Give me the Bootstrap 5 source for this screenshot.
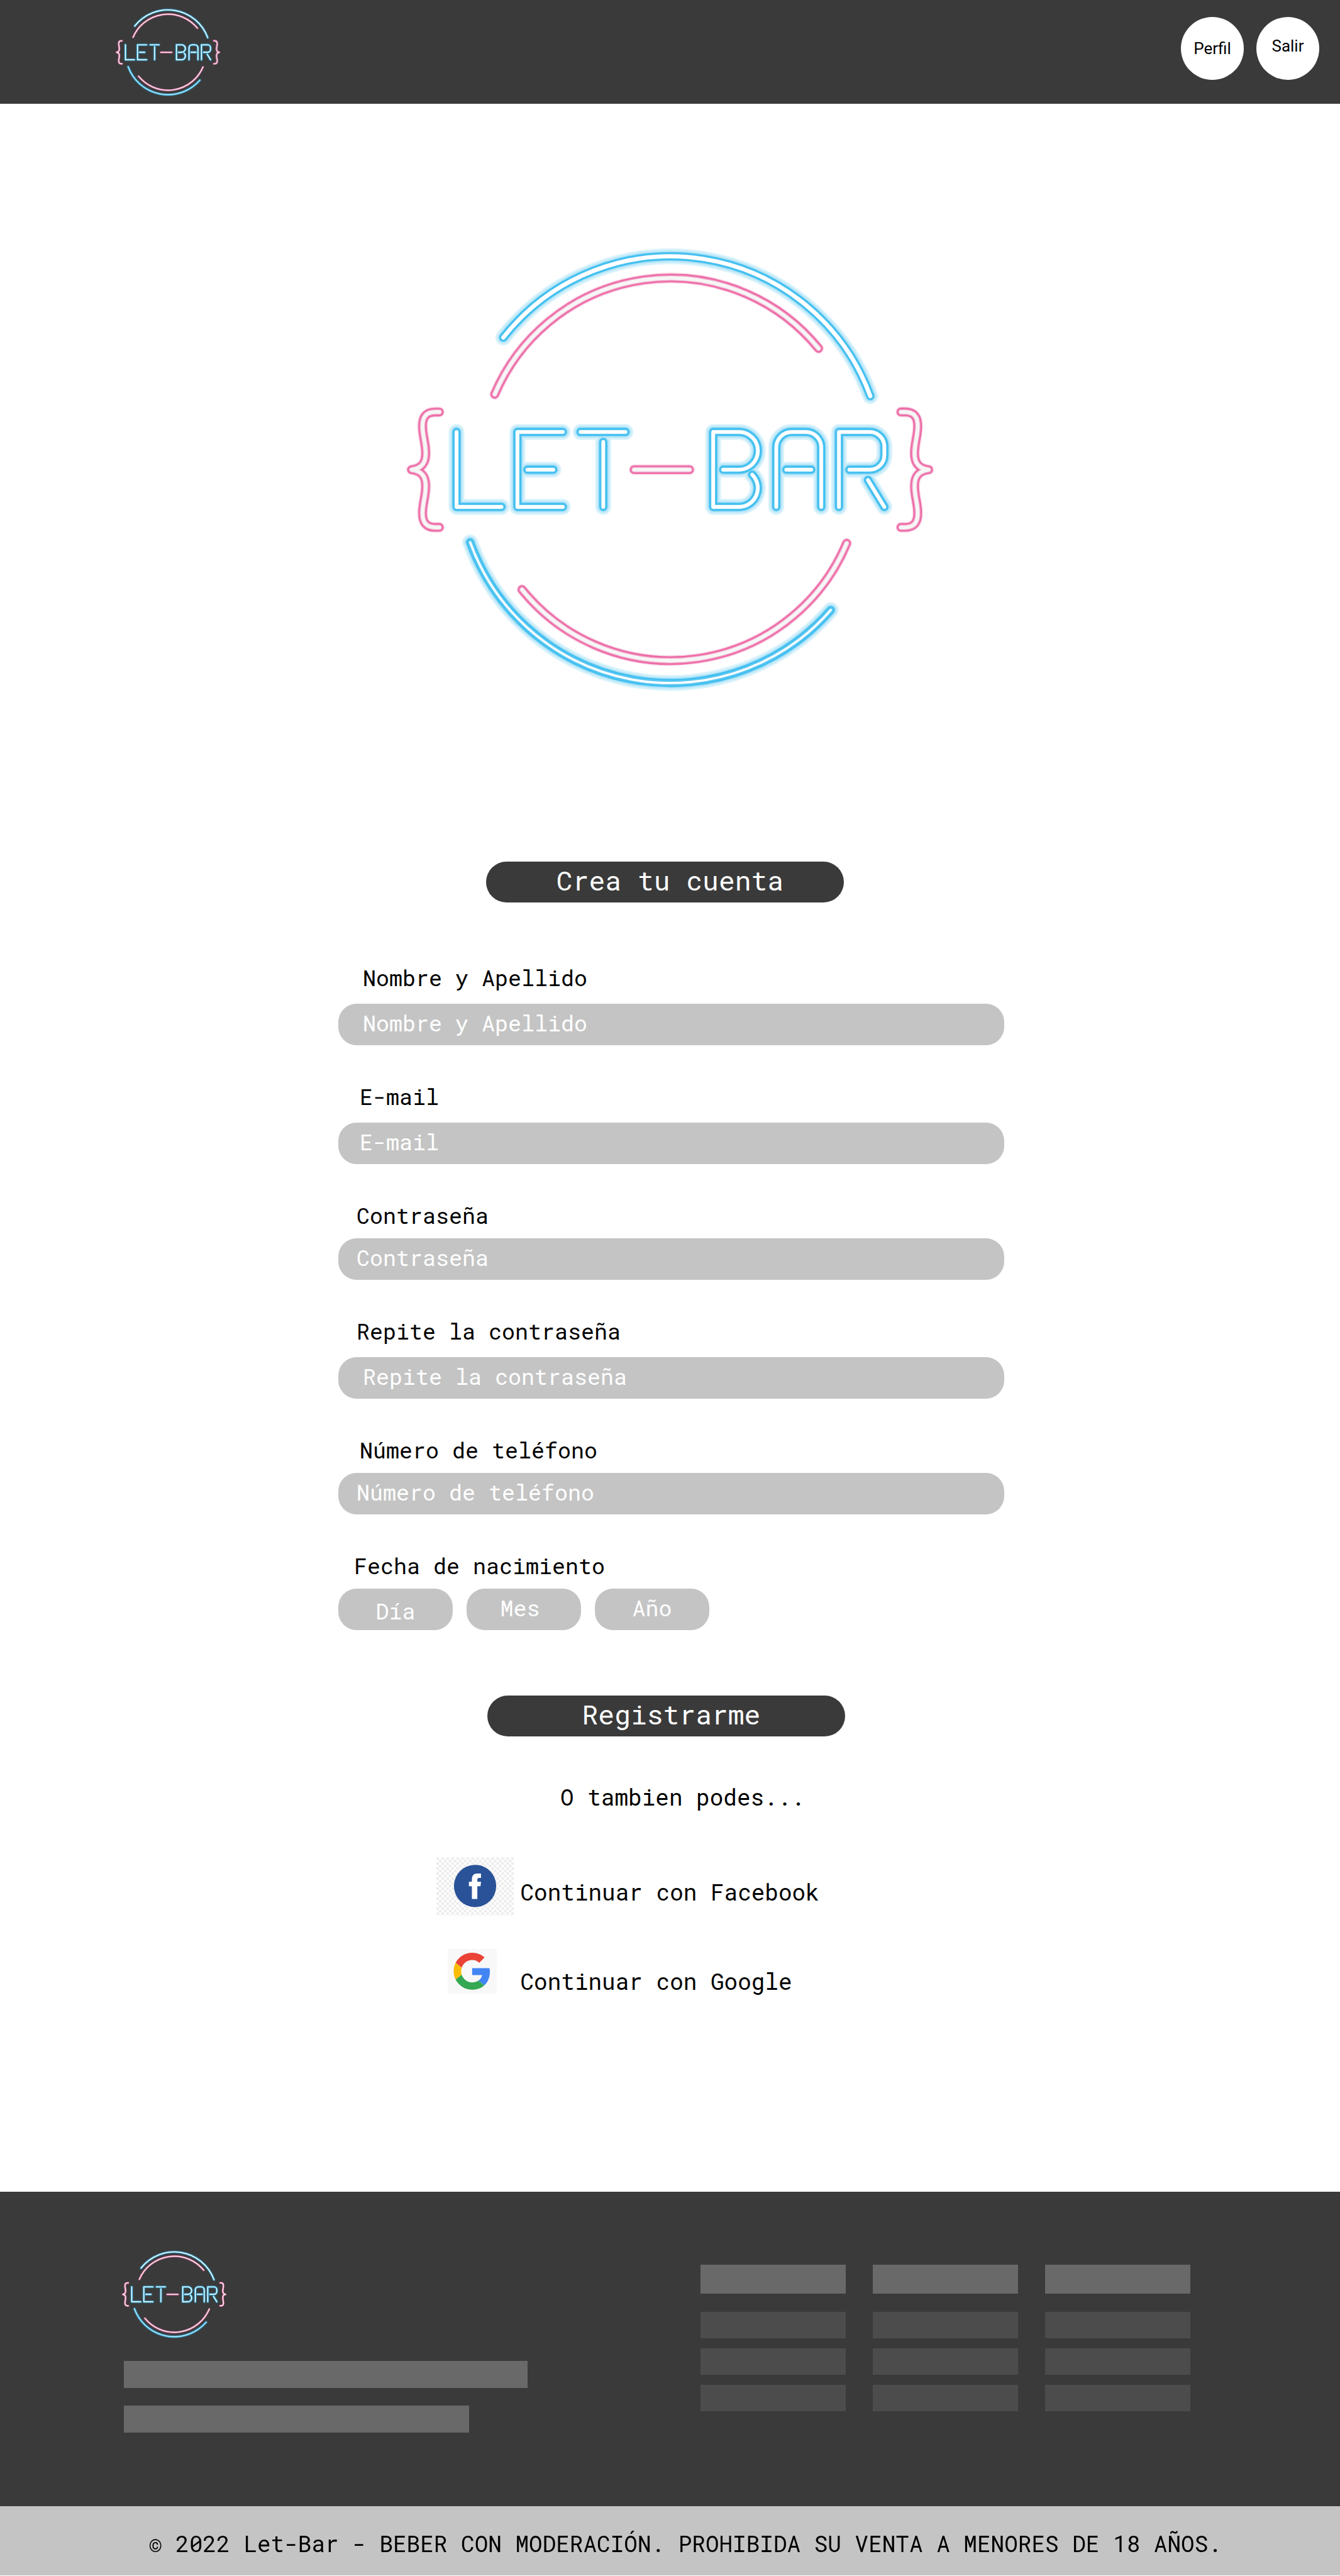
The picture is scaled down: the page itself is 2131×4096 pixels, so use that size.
<!DOCTYPE html>
<html lang="es">
<head>
<meta charset="utf-8">
<meta name="viewport" content="width=device-width, initial-scale=1">
<title>Let-Bar - Crea tu cuenta</title>
<link href="https://cdn.jsdelivr.net/npm/bootstrap@5.3.0/dist/css/bootstrap.min.css" rel="stylesheet">
<style>
  :root { --ink: #3a3a3a; --soft: #c4c4c4; }
  body { font-family: "Roboto Mono", "DejaVu Sans Mono", monospace; color: #000; background: #fff; }

  .site-bar { background: var(--ink); min-height: 165px; padding: 0 33px 0 183px; }
  .logo-sm { width: 168px; height: 142px; }
  .logo-lg { width: 845px; max-width: 90%; height: auto; }
  .hero { padding: 225px 0 268px; }
  .round-btn { width: 100px; height: 100px; padding: 0; border: 0; border-radius: 50%; background: #fff; color: #000;
    font-family: Roboto, sans-serif; font-size: 26px; line-height: 32px; }
  .round-btn:hover { background: #eee; }
  .bar-actions { gap: 20px; padding-bottom: 11px; }

  .pill { width: 569px; max-width: 100%; height: 65px; border: 0; border-radius: 33px; background: var(--ink); color: #fff;
    font-size: 43px; line-height: 60px; font-weight: 400; margin: 0; padding: 0 0 5px; text-align: center; }

  .signup { max-width: 1063px; padding-left: 4px; margin-top: 99px; }
  .signup-fields { gap: 61px; }
  .signup label, .signup legend { font-size: 35px; line-height: 40px; margin: 0 0 17px; float: none; }
  .signup .roomy label { margin-bottom: 22px; }
  .ind-a { padding-left: 39px; }
  .ind-b { padding-left: 34px; }
  .ind-c { padding-left: 29px; }
  .ind-d { padding-left: 25px; }
  .soft-input, .soft-input:focus { height: 66px; border: 0; border-radius: 29px; background: var(--soft); color: #fff;
    font-size: 35px; line-height: 40px; padding-top: 0; padding-bottom: 6px; }
  .soft-input::placeholder { color: #fff; opacity: 1; }
  .date-row { gap: 22px; }
  .date-row .soft-input { width: 182px; }
  .submit-row { margin-top: 104px; }

  .big-text { font-size: 36px; line-height: 40px; }
  .or-line { padding-left: 40px; margin: 76px 0; }
  .social { max-width: 744px; gap: 53px; padding-bottom: 315px; }
  .social a { color: #000; text-decoration: none; gap: 11px; }
  .social-slot { width: 123px; flex: none; }

  .foot-top { background: var(--ink); min-height: 500px; padding: 92px 238px 0 193px; }
  .ph { background: #696969; height: 43px; }
  .ph-head { background: #696969; height: 46px; margin-bottom: 13px; }
  .ph-item { background: #4c4c4c; height: 42px; }
  .ph-list { width: 642px; gap: 28px; margin-top: 35px; }
  .foot-cols { gap: 43px; }
  .foot-col { width: 231px; gap: 16px; }
  .foot-legal { background: var(--soft); min-height: 110px; }
</style>
</head>
<body>

<svg width="0" height="0" class="position-absolute" aria-hidden="true">
  <defs>
    <!-- neon tubes: centre lines, stroked several times for glow, wall and light -->
    <g id="tube-top"><path d="M1108 743A468.5 468.5 0 0 1 1916 872"/></g>
    <g id="tube-low"><path d="M1035 1194A468.5 468.5 0 0 0 1829 1343"/></g>
    <g id="tube-sign">
      <path d="M1005 951V1116H1104"/>
      <path d="M1239 951H1139V1116H1239M1161 1034H1218"/>
      <path d="M1278 951H1377M1328 973V1116"/>
      <path d="M1592 1034H1627A41.500 41.500 0 0 0 1627 951H1570V1116H1627A41.500 41.500 0 0 0 1656 1045"/>
      <path d="M1709 1116V985A34 34 0 0 1 1743 951H1774A34 34 0 0 1 1808 985V1116M1731 1034H1786"/>
      <path d="M1847 1116V951H1915A32 32 0 0 1 1947 983V1002A32 32 0 0 1 1915 1034H1870M1911 1057L1947 1116"/>
    </g>
    <g id="tube-pink">
      <path d="M1089 868A420.500 420.500 0 0 1 1802 767"/>
      <path d="M1149 1298A420.500 420.500 0 0 0 1864 1196"/>
      <path id="brace" d="M967 907H958C938 907 930 918 930 938C930 960 937 975 937 998C937 1020 928 1031 906 1034C928 1037 937 1048 937 1070C937 1093 930 1108 930 1130C930 1150 938 1161 958 1161H967"/>
      <use href="#brace" transform="translate(2950.500 0) scale(-1 1)"/>
      <path d="M1396 1034H1518"/>
    </g>
    <g id="tube-blue"><use href="#tube-top"/><use href="#tube-low"/><use href="#tube-sign"/></g>
    <symbol id="letbar" viewBox="890 540 1170 986">
      <g fill="none" stroke-linecap="round" stroke-linejoin="round">
        <use href="#tube-blue" stroke="#45c1f0" stroke-width="35" opacity=".18"/>
        <use href="#tube-blue" stroke="#45c1f0" stroke-width="29" opacity=".12"/>
        <use href="#tube-blue" stroke="#45c1f0" stroke-width="23" opacity=".25"/>
        <use href="#tube-blue" stroke="#41bff0" stroke-width="18"/>
        <use href="#tube-blue" stroke="#5cc8f2" stroke-width="11"/>
        <use href="#tube-top" stroke="#fff" stroke-width="9"/>
        <use href="#tube-sign" stroke="#fff" stroke-width="8"/>
        <use href="#tube-low" stroke="#fff" stroke-width="5"/>
        <use href="#tube-pink" stroke="#ec5fa0" stroke-width="23" opacity=".25"/>
        <use href="#tube-pink" stroke="#ec5fa0" stroke-width="19"/>
        <use href="#tube-pink" stroke="#f08ab8" stroke-width="14"/>
        <use href="#tube-pink" stroke="#f6f6f6" stroke-width="9"/>
      </g>
    </symbol>
    <pattern id="check-lg" width="11" height="11" patternUnits="userSpaceOnUse">
      <path fill="#fff" d="M0 0H11V11H0z"/><path fill="#ececec" d="M0 0H5.500V5.500H0zM5.500 5.500H11V11H5.500z"/>
    </pattern>
    <pattern id="check-sm" width="6" height="6" patternUnits="userSpaceOnUse">
      <path fill="#fff" d="M0 0H6V6H0z"/><path fill="#f1f1f1" d="M0 0H3V3H0zM3 3H6V6H3z"/>
    </pattern>
  </defs>
</svg>

<header class="site-bar d-flex align-items-center justify-content-between">
  <a href="#" aria-label="Let-Bar"><svg class="logo-sm d-block" aria-hidden="true"><use href="#letbar"/></svg></a>
  <nav class="bar-actions d-flex">
    <button type="button" class="round-btn">Perfil</button>
    <button type="button" class="round-btn pb-2">Salir</button>
  </nav>
</header>

<main>
  <div class="hero">
    <svg class="logo-lg d-block mx-auto" viewBox="0 0 1170 986" role="img" aria-label="Let-Bar"><use href="#letbar" width="1170" height="986"/></svg>
  </div>

  <div class="d-flex justify-content-center pe-3"><h1 class="pill ps-3">Crea tu cuenta</h1></div>

  <form class="signup mx-auto">
    <div class="signup-fields d-flex flex-column">
      <div class="roomy">
        <label class="d-block ind-a" for="nombre">Nombre y Apellido</label>
        <input class="form-control soft-input ind-a" id="nombre" type="text" placeholder="Nombre y Apellido">
      </div>
      <div class="roomy">
        <label class="d-block ind-b" for="email">E-mail</label>
        <input class="form-control soft-input ind-b" id="email" type="email" placeholder="E-mail">
      </div>
      <div>
        <label class="d-block ind-c" for="clave">Contraseña</label>
        <input class="form-control soft-input ind-c" id="clave" type="password" placeholder="Contraseña">
      </div>
      <div class="roomy">
        <label class="d-block ind-c" for="clave2">Repite la contraseña</label>
        <input class="form-control soft-input ind-a" id="clave2" type="password" placeholder="Repite la contraseña">
      </div>
      <div>
        <label class="d-block ind-b" for="tel">Número de teléfono</label>
        <input class="form-control soft-input ind-c" id="tel" type="tel" placeholder="Número de teléfono">
      </div>
      <fieldset>
        <legend class="ind-d">Fecha de nacimiento</legend>
        <div class="date-row d-flex">
          <input class="form-control soft-input text-center pt-1 pb-0" type="text" aria-label="Día" placeholder="Día">
          <input class="form-control soft-input text-center ps-0" type="text" aria-label="Mes" placeholder="Mes">
          <input class="form-control soft-input text-center" type="text" aria-label="Año" placeholder="Año">
        </div>
      </fieldset>
    </div>
    <div class="submit-row d-flex justify-content-center pe-3">
      <button type="submit" class="pill ps-3">Registrarme</button>
    </div>
  </form>

  <p class="or-line big-text text-center">O tambien podes...</p>

  <div class="social mx-auto d-flex flex-column">
    <a href="#" class="d-flex align-items-center">
      <svg class="social-slot" height="93" viewBox="0 0 170 128" aria-hidden="true">
        <path fill="url(#check-lg)" d="M0 0H170V128H0z"/>
        <circle cx="85" cy="63" r="46.500" fill="#2a5298"/>
        <path fill="#fff" d="M78 91.500V63.500H71.500V53.500H78V49C78 40 82 35.500 90 35.500H98V45.500H93.500C91 45.500 90 47 90 49.500V53.500H98L97 63.500H90V91.500z"/>
      </svg>
      <span class="big-text pt-3">Continuar con Facebook</span>
    </a>
    <a href="#" class="d-flex align-items-end">
      <span class="social-slot d-flex justify-content-center pe-2">
        <svg width="78" height="71" viewBox="0 0 108 98" aria-hidden="true">
          <path fill="url(#check-sm)" d="M0 0H108V98H0z"/>
          <g transform="translate(13 8) scale(1.700)">
            <path fill="#EA4335" d="M24 9.500c3.540 0 6.710 1.220 9.210 3.600l6.850-6.850C35.900 2.380 30.470 0 24 0 14.620 0 6.510 5.380 2.560 13.220l7.980 6.190C12.430 13.720 17.740 9.500 24 9.500z"/>
            <path fill="#4285F4" d="M46.980 24.550c0-1.570-.15-3.090-.38-4.550H24v9.020h12.940c-.58 2.960-2.260 5.480-4.780 7.180l7.730 6c4.510-4.180 7.090-10.360 7.090-17.650z"/>
            <path fill="#FBBC05" d="M10.530 28.590c-.48-1.450-.76-2.990-.76-4.590s.27-3.140.76-4.590l-7.980-6.190C.92 16.460 0 20.120 0 24c0 3.880.92 7.540 2.560 10.780l7.970-6.190z"/>
            <path fill="#34A853" d="M24 48c6.480 0 11.930-2.130 15.890-5.810l-7.730-6c-2.150 1.450-4.920 2.300-8.160 2.300-6.260 0-11.570-4.220-13.470-9.910l-7.980 6.190C6.510 42.620 14.620 48 24 48z"/>
          </g>
        </svg>
      </span>
      <span class="big-text">Continuar con Google</span>
    </a>
  </div>
</main>

<footer>
  <div class="foot-top d-flex justify-content-between align-items-start">
    <div>
      <svg class="logo-sm d-block" role="img" aria-label="Let-Bar"><use href="#letbar"/></svg>
      <div class="ph-list d-flex flex-column ms-1">
        <div class="ph"></div>
        <div class="ph" style="width:85.500%"></div>
      </div>
    </div>
    <div class="foot-cols d-flex pt-4">
      <div class="foot-col d-flex flex-column"><div class="ph-head"></div><div class="ph-item"></div><div class="ph-item"></div><div class="ph-item"></div></div>
      <div class="foot-col d-flex flex-column"><div class="ph-head"></div><div class="ph-item"></div><div class="ph-item"></div><div class="ph-item"></div></div>
      <div class="foot-col d-flex flex-column"><div class="ph-head"></div><div class="ph-item"></div><div class="ph-item"></div><div class="ph-item"></div></div>
    </div>
  </div>
  <div class="foot-legal big-text d-flex align-items-center justify-content-center ps-5 pt-2">© 2022 Let-Bar - BEBER CON MODERACIÓN. PROHIBIDA SU VENTA A MENORES DE 18 AÑOS.</div>
</footer>

<script src="https://cdn.jsdelivr.net/npm/bootstrap@5.3.0/dist/js/bootstrap.bundle.min.js"></script>
</body>
</html>
